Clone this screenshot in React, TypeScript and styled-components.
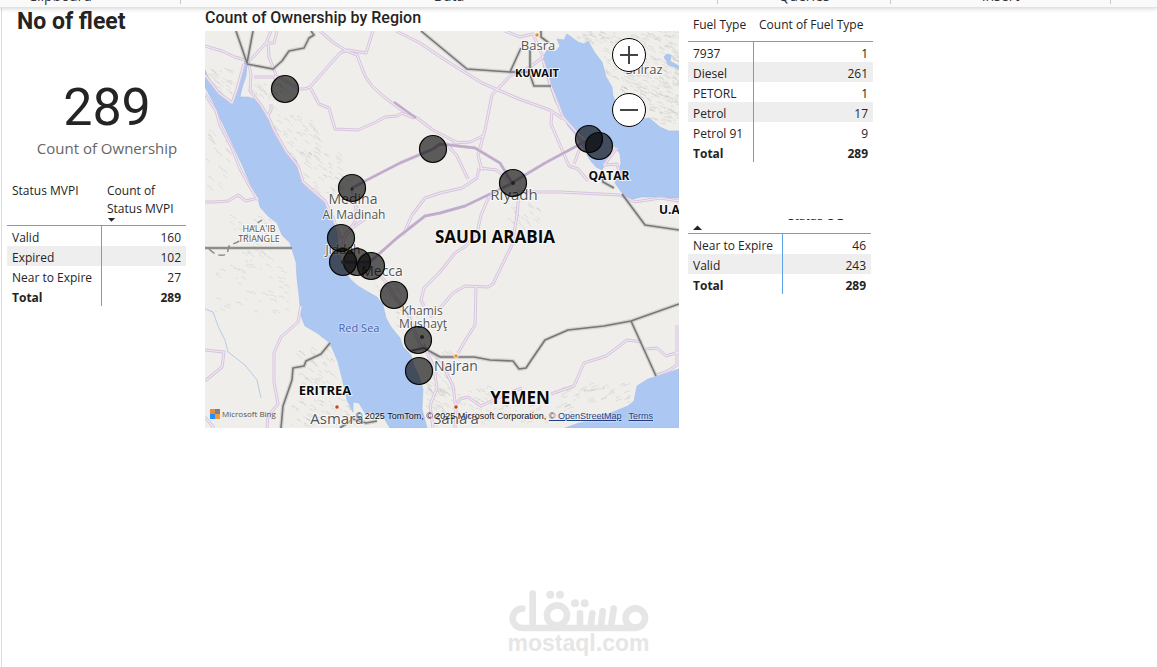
import React from "react";
import styled, { createGlobalStyle } from "styled-components";

const ui = `"Segoe UI", "Open Sans", "Noto Sans", sans-serif`;
const din = `Roboto, "Open Sans", sans-serif`;

const GlobalStyle = createGlobalStyle`
  * { box-sizing: border-box; }
  html { height: 100%; }
  body { margin: 0; min-height: 100%; background: #fff; color: #252423; font-family: ${ui}; }
`;

const Page = styled.div`
  display: flex;
  flex-direction: column;
  min-height: 100vh;
`;

const Ribbon = styled.header`
  display: grid;
  grid-template-columns: 181fr 537fr 173fr 220fr 46fr;
  height: 8px;
  overflow: hidden;
  background: #fafafa;
  border-bottom: 1px solid #e2e2e2;
  box-shadow: 0 1px 4px rgba(0, 0, 0, 0.16);
  position: relative;
`;

const RibbonGroup = styled.div<{ $cut?: boolean }>`
  display: flex;
  align-items: flex-end;
  justify-content: center;
  height: 4px;
  margin-left: ${(p) => (p.$cut ? "-60px" : "0")};
  border-right: 1px solid #c8c8c8;
  font-size: 14px;
  line-height: 16px;
  color: #333;

  &:last-child { border-right: 0; }
`;

const Report = styled.main`
  flex: 1;
  display: flex;
  flex-direction: column;
  justify-content: space-between;
  margin-left: 1px;
  border-left: 1px solid #dcdcdc;
`;

const Board = styled.div`
  display: grid;
  grid-template-columns: minmax(0, 203fr) minmax(0, 474fr) minmax(0, 478fr);
  align-items: start;
`;

const LeftColumn = styled.section`
  padding: 0 0 0 5px;
`;

const PageTitle = styled.h1`
  margin: 0;
  padding: 0 0 0 10px;
  font: 700 23px/27px ${din};
`;

const Card = styled.div`
  display: flex;
  flex-direction: column;
  align-items: center;
  width: 200px;
  padding: 44px 0 0;
`;

const CardValue = styled.div`
  font: 400 52px/58px ${din};
`;

const CardLabel = styled.div`
  font-size: 15px;
  line-height: 22px;
  color: #666;
`;

const LeftTable = styled.div`
  margin-top: 23px;
`;

const Table = styled.table<{ $width: number; $first: number }>`
  width: ${(p) => p.$width}px;
  table-layout: fixed;
  border-collapse: separate;
  border-spacing: 0;
  font-size: 12px;

  th, td { padding: 0 5px; white-space: nowrap; }
  th:first-child, td:first-child { width: ${(p) => p.$first}px; text-align: left; }
  td { height: 20px; padding-top: 4px; line-height: 16px; text-align: right; }
  td:first-child { border-right: 1px solid #5ba3ea; }
  thead th {
    padding-bottom: 3px;
    border-bottom: 1px solid #5ba3ea;
    font-weight: 400;
    vertical-align: top;
    text-align: left;
    line-height: 18px;
  }
  tbody tr:nth-child(even) td { background: #eee; }
  tfoot td { font-weight: 700; }
`;

const HeadText = styled.div<{ $height: number; $clip?: boolean }>`
  display: flex;
  flex-direction: column;
  justify-content: ${(p) => (p.$clip ? "flex-end" : "flex-start")};
  height: ${(p) => p.$height}px;
  overflow: ${(p) => (p.$clip ? "hidden" : "visible")};
`;

const SortMark = styled.svg`
  display: block;
  width: 9px;
  height: 5px;
  fill: #252423;
`;

const MapTitle = styled.h2`
  margin: 0;
  font: 500 16px/20px ${din};
  height: 23px;
  white-space: nowrap;
`;

const MapFrame = styled.div`
  position: relative;
  overflow: hidden;
`;

const MapSvg = styled.svg`
  display: block;
  width: 100%;
  height: auto;
  font-family: ${ui};
`;

const ZoomControls = styled.div`
  position: absolute;
  top: 7px;
  right: 33px;
  display: flex;
  flex-direction: column;
  gap: 21px;
`;

const ZoomButton = styled.button`
  display: grid;
  place-items: center;
  width: 34px;
  height: 34px;
  padding: 0;
  border: 1px solid #000;
  border-radius: 50%;
  background: #fff;
`;

const Bing = styled.div`
  position: absolute;
  left: 5px;
  bottom: 8px;
  display: flex;
  align-items: center;
  gap: 2px;
  font-size: 8px;
  line-height: 12px;
  color: #555;
`;

const Attribution = styled.div`
  position: absolute;
  right: 26px;
  bottom: 6px;
  display: flex;
  gap: 7px;
  font: 9px/12px "Liberation Sans", Arial, sans-serif;
  color: #111;
  white-space: nowrap;
  text-shadow: 0 0 2px #fff;

  a { color: #2558b8; }
  a:last-child { color: #223c80; }
`;

const RightColumn = styled.section`
  display: flex;
  flex-direction: column;
  gap: 57px;
  padding: 8px 0 0 9px;
`;

const Watermark = styled.footer`
  display: flex;
  flex-direction: column;
  align-items: center;
  padding-right: 2px;
  margin-bottom: 12px;
  color: #e6e6e6;
  font: 700 23px/23px "Liberation Sans", Arial, sans-serif;
`;

/* Sea areas, in map units */
const seas = [
  "M205 70L209 79L216 88L224 96L231 104L236 96L239 83L243 68L245 61L247 64L246 76L242 88L240 97L248 97L254 99L260 106L266 115L274 127L280 142L287 153L296 160L300 170L301 181L308 189L318 197L327 205L328 214L334 221L337 234L339 249L341 261L345 271L350 279L358 286L368 292L377 297L383 305L386 318L391 327L400 338L403 347L411 355L414 366L418 374L423 389L422 409L427 428H390L384 418L377 416L371 412L365 413L359 403L353 402L353 412L347 400L343 382L338 362L330 343L317 333L305 326L301 316L299 295L297 278L296 262L290 243L282 235L277 223L268 216L260 207L258 198L252 188L243 167L232 143L220 118L213 102L205 87Z",
  "M543 57L547 50L556 51L560 46L557 39L564 40L567 34L578 42L584 44L588 41L595 53L602 62L606 77L612 87L613 96L620 111L630 123L640 119L649 118L660 127L669 131L679 131V198L665 198L653 197L641 197L630 200L622 193L615 183L618 174L621 163L620 154L615 146L610 149L606 163L602 170L596 167L590 160L583 147L575 134L568 126L564 117L555 101L550 87L546 75L543 64Z",
  "M565 428L579 423L596 419L613 412L628 406L634 401L637 386L648 379L658 376L679 369V428Z",
  "M664 57L667 54L671 55L670 61L679 66V69L669 65Z",
];

const roads = [
  "M205 46L222 51L235 57L248 61",
  "M247 63L256 54L266 43L271 31",
  "M248 62L251 74L250 91L261 105L269 118L274 130L286 151L298 166L303 182L325 201L333 218L341 239",
  "M266 43L274 43L277 31",
  "M268 43L269 57L276 75L275 80M254 77H279L299 89H305",
  "M244 64L237 89L232 103L219 93L205 75",
  "M205 94L216 111L220 125L232 148L240 169L250 187L258 200",
  "M205 202H215L228 201L238 195L246 201L258 198",
  "M271 104V110L267 117",
  "M305 89L310 87L325 70L340 53L348 50L366 53L373 31",
  "M320 31L334 43L347 51L357 55L365 76L372 86L383 96L400 109L417 118L433 130L458 143",
  "M310 87L319 104L329 108L335 129L358 130L376 122L385 117L397 116L402 113L414 118",
  "M396 31L420 43L445 60L482 83L519 99L550 110L563 119",
  "M505 31L520 37L533 34L543 57L530 67L510 76L492 95L485 130L478 155L482 171",
  "M543 60L550 84L563 117L577 133L588 142",
  "M552 111L551 124L560 145L569 166L578 169L588 181M574 164L580 148",
  "M352 188L367 180L400 163L433 149",
  "M433 149L440 144L450 145L475 148L500 163L512 183",
  "M513 182L545 163L588 140",
  "M446 143L457 156L468 179M483 136L470 142L452 143",
  "M440 193L462 188L477 178L479 168",
  "M371 261L397 238L425 216L440 213L465 206L490 194L512 184",
  "M440 193L425 198L412 215L403 235",
  "M352 189L356 208L355 222L346 234L341 248L343 262L357 263L371 266L386 282L394 296",
  "M355 205L365 219L352 228L342 240",
  "M394 296L408 314L418 340L422 349L440 357L456 357",
  "M481 215L477 233L466 246L455 253L440 272L424 288L421 300L424 306",
  "M517 215L512 245L504 261L493 284L488 287L465 286L453 293L442 306L430 317",
  "M516 192H560L620 195",
  "M519 193L517 215M490 194L481 215",
  "M476 287L475 325L465 341L458 353",
  "M512 184L497 170L480 168",
  "M617 148L604 165L617 164L620 175",
  "M620 195L635 202L660 198L679 201",
  "M443 365L453 386L456 409L455 428",
  "M456 405L460 399L468 397L481 406L502 396L522 388M551 394L574 386L584 363L606 356L627 340L642 342",
  "M646 349L657 348L666 356L679 352",
  "M423 344L434 367L437 388L430 405L433 428",
  "M301 306L298 322L281 337L274 353L274 382L278 404L268 416L267 428",
  "M205 350L224 352L222 367L205 381M205 417L214 428",
  "M657 375L668 371L677 365V325",
];

const trunkRoads =
  "M352 188L367 180L400 163L433 149L440 144L450 145L475 148L500 163L512 183L545 163L588 140M512 183L490 194L465 206L440 213L425 216L397 238L371 261M394 102L416 118M343 262H371";

const borders = [
  "M236 31L247 63L253 31",
  "M247 64L273 69L282 61L289 51L304 48L309 38L314 35L311 31",
  "M421 31L467 69L510 72L521 48",
  "M510 72H529L534 86H551M530 50V72",
  "M541 31V37L549 43",
  "M205 248H292",
  "M603 176V182L614 188",
  "M622 194L645 225L679 230",
  "M440 357H474L490 360L513 361L519 369L526 368L532 359L545 340L568 330L604 326L631 321L679 304",
  "M631 321L656 376",
  "M440 357L424 348L410 351",
  "M281 428L283 406L292 380L293 368L304 366L306 361L321 354L330 343",
  "M340 428L353 419L366 423L377 421",
];

const streams = ["M205 309L213 312L218 326L225 340L228 352L245 365L257 380L261 398"];

/* Patches of relief: x, y, width, height, marks, slope */
const reliefAreas = [
  [208, 68, 24, 24, 30, 0.8],
  [252, 82, 30, 26, 34, 0.8],
  [268, 115, 48, 46, 60, 0.8],
  [300, 150, 42, 46, 50, 0.7],
  [205, 128, 22, 60, 20, 0.9],
  [228, 212, 42, 54, 38, 0.7],
  [214, 265, 74, 48, 40, 0.4],
  [575, 31, 104, 14, 90, 0.4],
  [602, 45, 77, 34, 160, 0.5],
  [620, 80, 59, 30, 110, 0.4],
  [648, 108, 31, 16, 34, 0.3],
  [372, 273, 24, 18, 24, 0.9],
  [394, 305, 20, 24, 24, 0.8],
  [425, 348, 24, 60, 60, 0.9],
  [428, 385, 60, 40, 60, 0.6],
  [490, 405, 80, 18, 50, -0.3],
  [560, 385, 70, 18, 46, -0.4],
  [296, 345, 36, 40, 40, 0.8],
  [290, 398, 60, 28, 60, 0.6],
  [500, 195, 40, 30, 24, 0.9],
];

function buildRelief() {
  let seed = 17;
  const next = () => {
    seed = (seed * 16807) % 2147483647;
    return seed / 2147483647;
  };
  return reliefAreas
    .map(([x, y, w, h, count, slope]) => {
      let d = "";
      for (let i = 0; i < count; i++) {
        const px = Math.round(x + next() * w);
        const py = Math.round(y + next() * h);
        const len = 2 + Math.round(next() * 5);
        d += `M${px} ${py}q${len / 2} ${(slope * len) / 4 - 1} ${len} ${slope * len}`;
      }
      return d;
    })
    .join("");
}
const relief = buildRelief();

type Label = { t: string; x: number; y: number; s: number; b?: boolean; c?: string; start?: boolean };
const labels: Label[] = [
  { t: "Basra", x: 538, y: 50, s: 13 },
  { t: "Shiraz", x: 644, y: 74, s: 13 },
  { t: "KUWAIT", x: 537, y: 77, s: 11, b: true },
  { t: "QATAR", x: 609, y: 180, s: 12, b: true },
  { t: "U.A.E.", x: 659, y: 214, s: 12, b: true, start: true },
  { t: "Riyadh", x: 514, y: 200, s: 15 },
  { t: "SAUDI ARABIA", x: 495, y: 243, s: 17, b: true },
  { t: "Medina", x: 353, y: 204, s: 14 },
  { t: "Al Madinah", x: 354, y: 219, s: 12 },
  { t: "HALA'IB", x: 259, y: 232, s: 9 },
  { t: "TRIANGLE", x: 259, y: 242, s: 9 },
  { t: "Jiddah", x: 343, y: 254, s: 12 },
  { t: "Mecca", x: 382, y: 276, s: 14 },
  { t: "Khamis", x: 422, y: 315, s: 12 },
  { t: "Mushayţ", x: 423, y: 328, s: 12 },
  { t: "Red Sea", x: 359, y: 332, s: 11, c: "#4863b4" },
  { t: "ERITREA", x: 325, y: 395, s: 13, b: true },
  { t: "Asmara", x: 337, y: 424, s: 15 },
  { t: "Sana'a", x: 456, y: 424, s: 15 },
  { t: "Najran", x: 456, y: 371, s: 14 },
  { t: "YEMEN", x: 520, y: 404, s: 17, b: true },
];

const towns = [
  [537, 35, "#f08c28"],
  [456, 356, "#f08c28"],
  [337, 407, "#c04a10"],
  [456, 407, "#c04a10"],
] as const;

const bubbles = [
  [285, 89], [433, 149], [513, 183], [589, 139], [599, 146], [352, 188], [341, 238],
  [343, 262], [357, 262], [371, 266], [394, 295], [418, 340], [419, 371],
];

function RegionMap() {
  return (
    <MapSvg viewBox="205 31 474 397" role="img" aria-label="Map of ownership by region">
      <rect x="205" y="31" width="474" height="397" fill="#efeeeb" />
      <path d={relief} fill="none" stroke="#8f8f88" strokeOpacity="0.18" />
      {seas.map((d) => <path key={d} d={d} fill="#abc7f2" stroke="#a3bde8" strokeWidth="0.6" />)}
      {streams.map((d) => <path key={d} d={d} fill="none" stroke="#b8cbe6" />)}
      <g fill="none" strokeLinejoin="round">
        {roads.map((d) => <path key={d} d={d} stroke="#d6c3dd" strokeWidth="3" />)}
        {roads.map((d) => <path key={d} d={d} stroke="#f1e9f2" strokeWidth="1.2" />)}
        <path d={trunkRoads} stroke="#bfaccb" strokeWidth="2.4" />
      </g>
      <g fill="none" strokeLinejoin="round">
        {borders.map((d) => <path key={d} d={d} stroke="#b9b9b7" strokeOpacity="0.5" strokeWidth="4" />)}
        {borders.map((d) => <path key={d} d={d} stroke="#777" strokeWidth="1.6" />)}
        <path d="M209 249Q218 258 227 254L229 246L244 239L256 224L262 220" stroke="#888" strokeWidth="1.4" strokeDasharray="7 4" />
      </g>
      {towns.map(([x, y, c]) => (
        <circle key={`${x}-${y}`} cx={x} cy={y} r="2.2" fill={c} stroke="#fff" strokeWidth="0.8" />
      ))}
      {labels.map((l) => (
        <text
          key={l.t}
          x={l.x}
          y={l.y}
          fontSize={l.s}
          fontWeight={l.b ? 700 : 400}
          textAnchor={l.start ? "start" : "middle"}
          fill={l.c ?? (l.b ? "#0a0a0a" : "#555")}
          stroke="#fff"
          strokeOpacity={l.c ? 0.3 : 0.7}
          strokeWidth="2"
          paintOrder="stroke"
        >
          {l.t}
        </text>
      ))}
      {bubbles.map(([x, y]) => (
        <circle key={`${x}-${y}`} cx={x} cy={y} r="13.5" fill="#000" fillOpacity="0.62" stroke="#080808" strokeWidth="1.2" />
      ))}
      <g fill="#222">
        <circle cx="513" cy="183" r="2" />
        <circle cx="343" cy="262" r="2" />
        <circle cx="422" cy="337" r="2" />
        <circle cx="352" cy="189" r="1.5" />
      </g>
    </MapSvg>
  );
}

type DataTableProps = {
  width: number;
  first: number;
  head: React.ReactNode;
  rows: [string, number][];
};

function DataTable({ width, first, head, rows }: DataTableProps) {
  return (
    <Table $width={width} $first={first}>
      <thead><tr>{head}</tr></thead>
      <tbody>
        {rows.map(([name, count]) => (
          <tr key={name}><td>{name}</td><td>{count}</td></tr>
        ))}
      </tbody>
      <tfoot><tr><td>Total</td><td>289</td></tr></tfoot>
    </Table>
  );
}

export default function App() {
  return (
    <Page>
      <GlobalStyle />
      <Ribbon>
        <RibbonGroup $cut>Clipboard</RibbonGroup>
        <RibbonGroup>Data</RibbonGroup>
        <RibbonGroup>Queries</RibbonGroup>
        <RibbonGroup>Insert</RibbonGroup>
        <RibbonGroup />
      </Ribbon>
      <Report>
        <Board>
          <LeftColumn>
            <PageTitle>No of fleet</PageTitle>
            <Card>
              <CardValue>289</CardValue>
              <CardLabel>Count of Ownership</CardLabel>
            </Card>
            <LeftTable>
              <DataTable
                width={179}
                first={95}
                head={
                  <>
                    <th scope="col">Status MVPI</th>
                    <th scope="col">
                      <HeadText $height={40}>
                        <span>Count of</span>
                        <span>Status MVPI</span>
                        <SortMark viewBox="0 0 9 5"><path d="M0 0H9L4.5 4.6Z" /></SortMark>
                      </HeadText>
                    </th>
                  </>
                }
                rows={[["Valid", 160], ["Expired", 102], ["Near to Expire", 27]]}
              />
            </LeftTable>
          </LeftColumn>

          <section>
            <MapTitle>Count of Ownership by Region</MapTitle>
            <MapFrame>
              <RegionMap />
              <ZoomControls>
                <ZoomButton aria-label="Zoom in">
                  <svg width="18" height="18" stroke="#444" strokeWidth="2"><path d="M0 9H18M9 0V18" /></svg>
                </ZoomButton>
                <ZoomButton aria-label="Zoom out">
                  <svg width="18" height="18" stroke="#444" strokeWidth="2"><path d="M0 9H18" /></svg>
                </ZoomButton>
              </ZoomControls>
              <Bing>
                <svg width="10" height="10">
                  <path d="M0 0H5V5H0Z" fill="#f0883a" />
                  <path d="M5 0H10V5H5Z" fill="#85807a" />
                  <path d="M0 5H5V10H0Z" fill="#1e90ff" />
                  <path d="M5 5H10V10H5Z" fill="#f29a3c" />
                </svg>
                Microsoft Bing
              </Bing>
              <Attribution>
                <span>
                  © 2025 TomTom, © 2025 Microsoft Corporation, <a href="#osm">© OpenStreetMap</a>
                </span>
                <a href="#terms">Terms</a>
              </Attribution>
            </MapFrame>
          </section>

          <RightColumn>
            <DataTable
              width={185}
              first={66}
              head={
                <>
                  <th scope="col"><HeadText $height={22}>Fuel Type</HeadText></th>
                  <th scope="col">Count of Fuel Type</th>
                </>
              }
              rows={[["7937", 1], ["Diesel", 261], ["PETORL", 1], ["Petrol", 17], ["Petrol 91", 9]]}
            />
            <DataTable
              width={183}
              first={95}
              head={
                <>
                  <th scope="col">
                    <HeadText $height={11} $clip>
                      <SortMark viewBox="0 0 9 5"><path d="M0 5H9L4.5 0.4Z" /></SortMark>
                    </HeadText>
                  </th>
                  <th scope="col"><HeadText $height={6} $clip>Status OG</HeadText></th>
                </>
              }
              rows={[["Near to Expire", 46], ["Valid", 243]]}
            />
          </RightColumn>
        </Board>
        <Watermark>
          <svg width="140" height="42" viewBox="57 28 420 126" fill="none" stroke="currentColor" strokeWidth="20" strokeLinecap="round" aria-hidden="true">
            <path d="M97 84A29 29 0 1 0 97 142H436M128 39V142" />
            <circle cx="201" cy="104" r="30" />
            <circle cx="436" cy="112" r="29" />
            <path d="M270 98V138M307 98L302 138M338 92L333 138M371 84L363 138" />
            <g fill="currentColor" stroke="none">
              <circle cx="181" cy="42" r="12" />
              <circle cx="210" cy="42" r="12" />
              <circle cx="255" cy="68" r="12" />
              <circle cx="284" cy="68" r="12" />
            </g>
          </svg>
          mostaql.com
        </Watermark>
      </Report>
    </Page>
  );
}
